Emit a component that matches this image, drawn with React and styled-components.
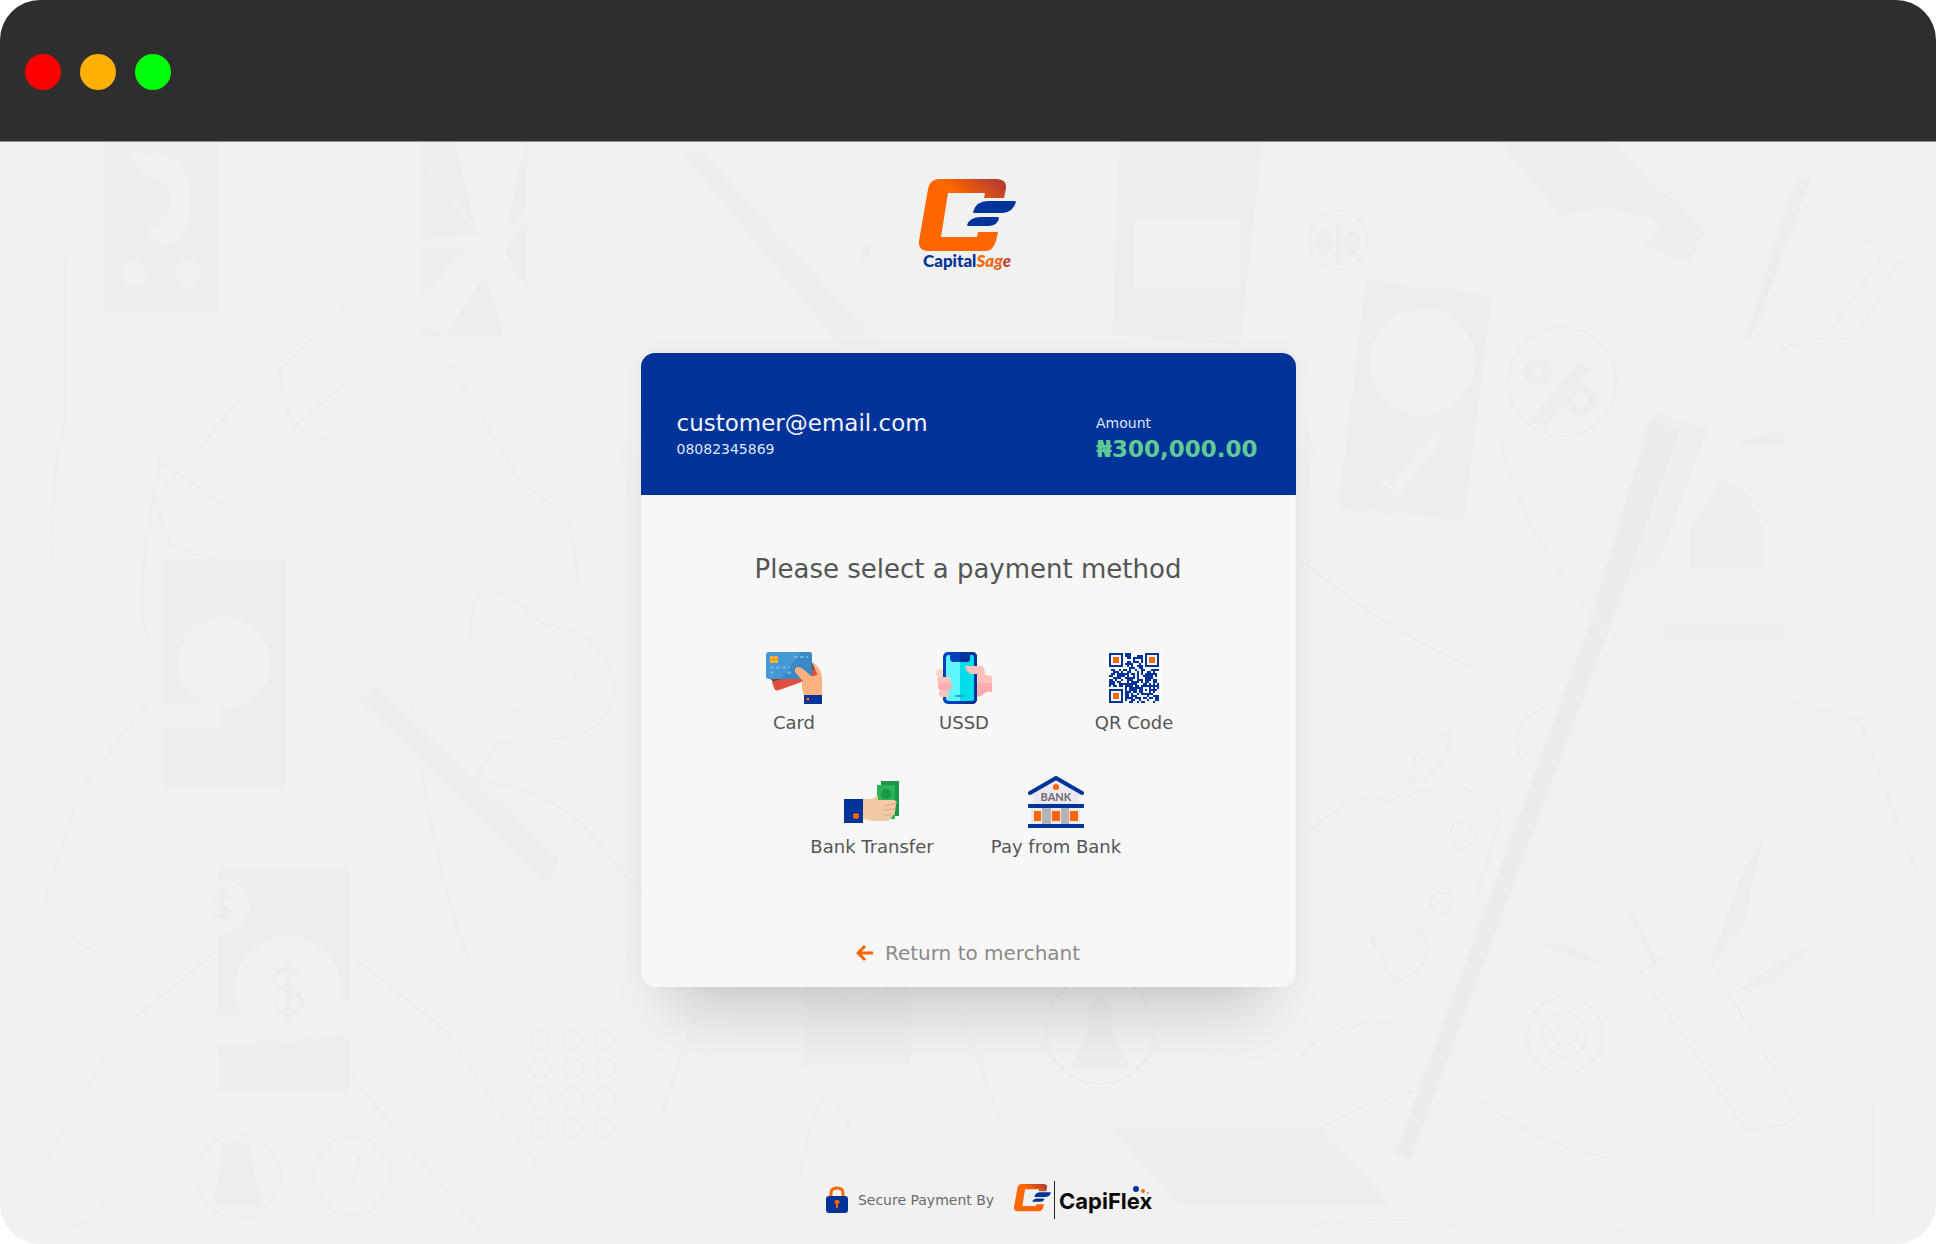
import React from "react";
import styled, { createGlobalStyle } from "styled-components";

const BLUE = "#003399";
const ORANGE = "#ff6600";
const SANS = '"DejaVu Sans", "Noto Sans", sans-serif';

const GlobalStyle = createGlobalStyle`
  * { box-sizing: border-box; }
  body { margin: 0; background: #ffffff; font-family: ${SANS}; }
`;

const Window = styled.div`
  min-height: 100vh;
  display: flex;
  flex-direction: column;
  border-radius: 40px;
  overflow: hidden;
  background: #f1f1f1;
`;

const TitleBar = styled.header`
  display: flex;
  gap: 19px;
  padding: 54px 25px 51px;
  background: #2e2e2e;
  border-bottom: 1px solid #909090;
`;

const Dot = styled.span`
  width: 36px;
  height: 36px;
  border-radius: 50%;
  background: ${(p) => p.$color};
`;

const Page = styled.main`
  position: relative;
  flex: 1;
  display: flex;
  flex-direction: column;
  align-items: center;
  padding: 37px 24px 25px;
`;

const Backdrop = styled.svg`
  position: absolute;
  inset: 0;
  width: 100%;
  height: 100%;
  opacity: 0.75;
`;

const Brand = styled.svg`
  position: relative;
  width: 98px;
  height: 96px;
`;

const Checkout = styled.section`
  position: relative;
  width: 100%;
  max-width: 655px;
  margin: 78px 0 80px;
  border-radius: 14px;
  box-shadow: 0 54px 56px -34px rgba(0, 0, 0, 0.17), 0 0 24px rgba(0, 0, 0, 0.03);
`;

const Summary = styled.div`
  display: flex;
  justify-content: space-between;
  align-items: flex-end;
  padding: 56px 38px 32px 36px;
  background: ${BLUE};
  border-radius: 14px 14px 0 0;
`;

const Customer = styled.div`
  display: flex;
  flex-direction: column;
  gap: 4px;
  padding-bottom: 6px;
`;

const Total = styled.div`
  display: flex;
  flex-direction: column;
  gap: 4px;
`;

const Large = styled.span`
  font-size: 23px;
  line-height: 28px;
  font-weight: ${(p) => (p.$strong ? 700 : 400)};
  color: ${(p) => (p.$strong ? "#5fcb94" : "#f1f4fa")};
`;

const Small = styled.span`
  font-size: 14px;
  line-height: 16px;
  color: #dfe6f3;
`;

const Body = styled.div`
  display: flex;
  flex-direction: column;
  align-items: center;
  margin: 0 1px;
  padding: 58px 24px 22px;
  background: #f7f7f7;
  border-radius: 0 0 14px 14px;
`;

const Heading = styled.h1`
  margin: 0 0 67px;
  font-size: 26px;
  line-height: 32px;
  font-weight: 400;
  color: #555555;
`;

const Methods = styled.div`
  display: flex;
  flex-direction: column;
  gap: 41px;
  margin-bottom: 82px;
  padding-right: 8px;
`;

const MethodRow = styled.div`
  display: grid;
  justify-content: center;
  grid-template-columns: repeat(${(p) => p.$count}, ${(p) => p.$column}px);
`;

const Method = styled.button`
  display: flex;
  flex-direction: column;
  align-items: center;
  gap: 7px;
  padding: 0;
  border: 0;
  background: none;
  cursor: pointer;
  font-family: ${SANS};
  font-size: 18px;
  line-height: 24px;
  color: #555555;
`;

const Picture = styled.svg`
  width: 56px;
  height: 52px;
`;

const Return = styled.a`
  display: flex;
  align-items: center;
  gap: 11px;
  font-size: 20px;
  line-height: 24px;
  color: #8a8a8a;
  text-decoration: none;
`;

const Arrow = styled.svg`
  width: 18px;
  height: 18px;
`;

const Footer = styled.footer`
  position: relative;
  display: flex;
  align-items: center;
  margin-top: auto;
  padding-left: 44px;
  font-size: 14px;
  line-height: 20px;
  color: #6b6b6b;
`;

const Lock = styled.svg`
  width: 22px;
  height: 28px;
  margin-right: 10px;
`;

const Partner = styled.svg`
  width: 140px;
  height: 38px;
  margin-left: 20px;
`;

function Mark({ id }) {
  return (
    <>
      <defs>
        <linearGradient id={id} x1="0" y1="1" x2="1" y2="0">
          <stop offset="0.62" stopColor="#ff6600" />
          <stop offset="0.95" stopColor="#b23c33" />
        </linearGradient>
      </defs>
      <path
        fill={`url(#${id})`}
        d="M9 10Q11 0 20 0H77Q88 0 87 9L85 19H65L66 14H29L22 58H58L59 53H79L77 62Q74 72 66 72H8Q-1 71 0 62Z"
      />
      <path
        fill={BLUE}
        d="M97 23Q97 22 95 22H69Q57 22 54 33Q54 34 56 34H84Q94 33 97 23ZM80 39Q80 38 78 38H62Q51 38 48 46Q48 47 50 47H70Q79 46 80 39Z"
      />
    </>
  );
}

function CardIcon() {
  return (
    <Picture viewBox="0 0 56 52" aria-hidden="true">
      <path fill="#ffb27f" d="M46 10Q55 15 56 25V43H38L36 37V24Z" />
      <path fill="#6b4a3c" d="M4 26H46V10L50 20L9 33Z" />
      <path fill="#e04f3f" d="M6 30L48 17L51 21Q52 24 49 25L12 38.500Q9 39 8 36Z" />
      <path fill="#ffb27f" d="M38 26L48 24L54 22V43H38Q35 34 38 26Z" />
      <rect width="46" height="27" rx="3" fill="#4599d5" />
      <path fill="#3b88c6" d="M35 0H43Q46 0 46 3V24Q46 27 43 27H15Z" />
      <rect x="4" y="4" width="8" height="7" rx="1" fill="#ffb52e" />
      <path d="M4 7.500H12M8 4V11" stroke="#f58a1f" strokeWidth="1" />
      <path
        d="M4 15.500H24M4 20.500H8M21 20.500H25M28 5H42"
        stroke="#6fb5d8"
        strokeWidth="2"
        strokeDasharray="4 2"
      />
      <path fill="#ffb27f" d="M29 20Q28 15 33 15L37 17L50 28L44 38L36 28Z" />
      <rect x="38" y="43" width="18" height="9" fill={BLUE} />
      <circle cx="42" cy="47" r="1.500" fill={ORANGE} />
    </Picture>
  );
}

function PhoneIcon() {
  return (
    <Picture viewBox="0 0 56 52" aria-hidden="true">
      <rect y="17" width="14" height="8" rx="4" fill="#ffd6c7" />
      <path fill="#ffc3bb" d="M36 14H46Q49 15 49 23L56 24V32H38Z" />
      <path fill="#ffacae" d="M38 31H56V40H50Q46 45 38 45Z" />
      <rect x="7" width="34" height="52" rx="5" fill="#003fc0" />
      <path fill={BLUE} d="M24 0H36Q41 0 41 5V47Q41 52 36 52H24Z" />
      <rect x="10" y="3" width="28" height="46" rx="3" fill="#60f6ff" />
      <path fill="#00dce8" d="M24 3H35Q38 3 38 6V46Q38 49 35 49H24Z" />
      <path fill="#003fc0" d="M14 0H34V6Q34 10 30 10H18Q14 10 14 6Z" />
      <path fill={BLUE} d="M24 0H34V6Q34 10 30 10H24Z" />
      <rect x="19" y="43" width="10" height="2" rx="1" fill="#00b4cf" />
      <rect x="1" y="25" width="14" height="7" rx="3" fill="#ffc3bb" />
      <rect x="2" y="31" width="14" height="7" rx="3" fill="#ffacae" />
      <rect x="3" y="38" width="10" height="7" rx="3" fill="#ffc3bb" />
      <path fill="#ffc3bb" d="M29 14H44Q48 14 49 23V31H41V22L35 22Q30 20 29 14Z" />
    </Picture>
  );
}

const QR_SIZE = 25;
const qrModules = [];
let seed = 11;
for (let y = 0; y < QR_SIZE; y += 1) {
  for (let x = 0; x < QR_SIZE; x += 1) {
    seed = (seed * 16807) % 2147483647;
    const inFinder = (x < 8 && y < 8) || (x > 16 && y < 8) || (x < 8 && y > 16);
    const inAlign = x > 15 && x < 21 && y > 15 && y < 21;
    if (!inFinder && !inAlign && seed % 100 < 54) qrModules.push([x, y]);
  }
}

function Finder({ x, y }) {
  return (
    <g transform={`translate(${x} ${y})`}>
      <rect x="1" y="1" width="12" height="12" fill="#ffffff" stroke={BLUE} strokeWidth="2" />
      <rect x="4" y="4" width="6" height="6" fill={ORANGE} />
    </g>
  );
}

function QrIcon() {
  return (
    <Picture viewBox="0 0 56 52" aria-hidden="true">
      <rect x="1" width="54" height="52" fill="#ffffff" />
      <g transform="translate(3 1)" fill={BLUE}>
        {qrModules.map(([x, y]) => (
          <rect key={`${x}-${y}`} x={x * 2} y={y * 2} width="2" height="2" />
        ))}
        <Finder x={0} y={0} />
        <Finder x={36} y={0} />
        <Finder x={0} y={36} />
        <rect x="33" y="33" width="8" height="8" fill="none" stroke={BLUE} strokeWidth="2" />
        <rect x="36" y="36" width="2" height="2" />
      </g>
    </Picture>
  );
}

function TransferIcon() {
  return (
    <Picture viewBox="0 0 56 52" aria-hidden="true">
      <rect x="37" y="5" width="18" height="35" fill="#1f9547" />
      <path fill="#2ab557" d="M33 9H51V43H47L33 30Z" />
      <circle cx="42" cy="18" r="5" fill="#1f9547" />
      <path fill="#f2c9a0" d="M19 23H28Q32 20 34 20V24H50Q54 25 52 28L51 36Q50 40 48 40Q47 45 43 45H30L19 43Z" />
      <path d="M41 30L52 27M40 34L51 33M39 39L48 39" stroke="#dfa884" strokeWidth="1" />
      <rect y="23" width="19" height="24" fill={BLUE} />
      <circle cx="12" cy="40" r="3" fill={ORANGE} />
    </Picture>
  );
}

function BankIcon() {
  return (
    <Picture viewBox="0 0 56 52" aria-hidden="true">
      <path fill="#ebe9f0" d="M28 3L51 17V28H5V17Z" />
      <rect x="3" y="31" width="49" height="17" fill="#ebe9f0" />
      <path d="M2 17L28 2L54 17" fill="none" stroke={BLUE} strokeWidth="4" strokeLinecap="round" />
      <circle cx="28" cy="11" r="3" fill={ORANGE} />
      <text
        x="28"
        y="25"
        textAnchor="middle"
        fontFamily="Lato, sans-serif"
        fontSize="11"
        fontWeight="700"
        fill="#6e6672"
      >
        BANK
      </text>
      <path fill="#b7b2b8" d="M14 31H23V48H14ZM33 31H41V48H33Z" />
      <path fill={ORANGE} d="M6 35H13V45H6ZM24 35H32V45H24ZM42 35H50V45H42Z" />
      <rect y="28" width="56" height="4" rx="1" fill={BLUE} />
      <rect y="48" width="56" height="4" fill={BLUE} />
    </Picture>
  );
}

function PageBackdrop() {
  const line = { fill: "none", stroke: "#ececec", strokeWidth: 2 };
  return (
    <Backdrop viewBox="0 142 1936 1102" preserveAspectRatio="xMidYMin slice" aria-hidden="true">
      <g fill="#eeeeee">
        <rect x="104" y="142" width="114" height="168" />
        <path d="M420 142H527V338H420Z" />
        <rect x="163" y="559" width="124" height="228" rx="6" />
        <rect x="218" y="868" width="132" height="224" rx="8" />
        <path d="M360 700L375 686L560 860L545 882Z" />
        <path d="M1500 142H1610L1705 230L1690 262L1560 215Z" />
        <path d="M1366 280L1492 295L1464 520L1338 508Z" />
        <path d="M1656 412L1708 428L1660 560L1590 622L1620 520Z" opacity="0.6" />
        <path d="M1690 568V530L1722 480L1745 490L1764 530V568Z" />
        <path d="M1740 440L1784 432V445H1736Z" />
        <path d="M1664 622H1784V642H1664Z" />
        <path d="M1120 142H1262L1240 345L1112 335Z" />
        <path d="M680 150L700 150L880 345H840Z" />
        <path d="M1110 1128H1320L1392 1205H1180Z" />
        <rect x="805" y="975" width="105" height="90" />
        <path d="M1625 905L1640 925L1662 975L1646 950ZM1762 840L1744 925L1710 965L1740 880Z" />
        <path d="M1540 945L1562 942L1610 967L1575 958ZM1735 993L1770 968L1812 945L1780 980Z" />
      </g>
      <path fill="#ebebeb" d="M1650 420L1590 622L1395 1155L1410 1160L1612 622L1680 430ZM1796 180H1810L1755 330L1745 340Z" />
      <g fill="#f1f1f1">
        <path d="M132 155Q190 145 190 200Q190 240 165 243Q140 235 152 227Q180 220 165 178Q140 180 132 155Z" />
        <circle cx="135" cy="273" r="13" />
        <circle cx="188" cy="273" r="13" />
        <path d="M420 160L480 235L420 238V247H465L420 300V325L445 335L485 275L505 338L527 350V290L505 250L527 220V205L505 235L525 142H455L475 225L430 170Z" />
        <circle cx="224" cy="663" r="46" />
        <path d="M160 705H220V728H160Z" />
        <circle cx="288" cy="990" r="53" />
        <circle cx="222" cy="906" r="27" />
        <path d="M218 1015L350 1000V1035L290 1040L218 1045Z" />
        <ellipse cx="1602" cy="229" rx="58" ry="19" />
        <ellipse cx="1650" cy="275" rx="60" ry="17" />
        <circle cx="1422" cy="362" r="53" />
        <path d="M1378 478L1392 485L1435 432L1442 440L1395 500Z" />
        <ellipse cx="857" cy="980" rx="28" ry="20" />
        <path d="M1135 220H1240V290H1135Z" />
      </g>
      <g {...line}>
        <circle cx="238" cy="1176" r="42" />
        <circle cx="352" cy="1176" r="39" />
        <path d="M360 1155Q354 1180 354 1192" />
        <circle cx="1565" cy="1035" r="38" />
        <circle cx="1565" cy="1035" r="22" />
        <circle cx="1565" cy="1035" r="11" />
        <circle cx="1463" cy="835" r="13" />
        <circle cx="1442" cy="903" r="11" />
        <circle cx="1100" cy="1030" r="54" />
        <path d="M1543 708Q1500 728 1525 765M1410 775Q1420 730 1450 735Q1448 770 1410 785Z" />
        <path d="M1300 1060Q1320 1020 1410 1022M1300 1140Q1380 1095 1412 1092" />
        <path d="M1640 973L1660 960H1710L1800 1115Q1795 1125 1745 1130Z" />
        <path d="M1310 832Q1350 790 1390 800Q1490 770 1500 820L1475 900" />
        <path d="M1370 935L1390 942L1420 930Q1445 960 1395 982Z" />
      </g>
      <g fill="none" stroke="#eeeeee" strokeWidth="2">
        <circle cx="1562" cy="382" r="54" />
        <circle cx="1338" cy="240" r="29" />
        <path d="M35 1180L120 1030L218 950M60 1225Q90 1235 110 1190L180 1080L218 1050M350 955L445 1030L540 1170M350 1075L420 1160L480 1230" />
        <path d="M65 260V420Q50 480 52 560M350 300L280 370Q285 440 325 440M230 510L160 460Q130 620 150 640" />
        <path d="M350 380L290 430M240 400L155 500L170 545L250 570M450 365L520 480L570 520L580 590" />
        <path d="M470 640Q470 550 540 622Q630 640 610 710Q590 745 500 742L475 780Q570 790 610 860L660 910" />
        <path d="M150 700L80 790L45 900Q70 950 110 955M410 700Q440 900 470 960M510 665H575V688H515M515 710H570" />
        <path d="M1500 440Q1530 560 1620 640M1300 560Q1400 640 1480 670H1530M1780 700L1860 720L1900 830L1920 880" />
        <path d="M1810 240H1870L1880 262L1830 330M1900 260L1860 330M1780 350Q1810 335 1850 340M1873 1100V1220M1480 1100Q1560 1160 1640 1160L1670 1220" />
        <path d="M1300 1228Q1400 1210 1470 1230H1620M700 1000L660 1120M800 1180Q820 1050 850 1130M960 1010L1000 1120" />
        {[1040, 1068, 1098, 1128].map((y) =>
          [540, 573, 605].map((x) => <circle key={`${x}-${y}`} cx={x} cy={y} r="10" />)
        )}
      </g>
      <g fill="#ececec">
        <path d="M222 1145Q238 1135 250 1145L254 1170L262 1205H212L220 1170Z" />
        <path d="M1088 1005Q1100 990 1112 1005V1030L1130 1068H1070L1088 1030Z" />
        <path d="M1530 420L1580 362L1590 368L1545 428Z" />
        <circle cx="1538" cy="372" r="14" />
        <circle cx="1580" cy="400" r="16" />
        <ellipse cx="1324" cy="242" rx="8" ry="13" />
        <ellipse cx="1352" cy="242" rx="8" ry="13" />
        <rect x="1336" y="224" width="5" height="38" />
      </g>
      <circle cx="1538" cy="372" r="6" fill="#f1f1f1" />
      <circle cx="1580" cy="400" r="7" fill="#f1f1f1" />
      <path
        d="M300 975Q290 965 278 972Q268 985 288 990Q310 998 298 1010Q285 1018 275 1006M288 960V1022M229 896Q215 890 215 900Q229 908 228 915Q218 920 213 912M222 888V922"
        fill="none"
        stroke="#ececec"
        strokeWidth="4"
      />
      <ellipse cx="866" cy="254" rx="4" ry="8" fill="#fbe6da" opacity="0.5" />
    </Backdrop>
  );
}

const primary = [
  { label: "Card", Icon: CardIcon },
  { label: "USSD", Icon: PhoneIcon },
  { label: "QR Code", Icon: QrIcon },
];
const secondary = [
  { label: "Bank Transfer", Icon: TransferIcon },
  { label: "Pay from Bank", Icon: BankIcon },
];

function MethodGroup({ items, column }) {
  return (
    <MethodRow $count={items.length} $column={column}>
      {items.map(({ label, Icon }) => (
        <Method key={label} type="button">
          <Icon />
          {label}
        </Method>
      ))}
    </MethodRow>
  );
}

export default function App() {
  return (
    <>
      <GlobalStyle />
      <Window>
        <TitleBar>
          <Dot $color="#ff0000" />
          <Dot $color="#ffb000" />
          <Dot $color="#00ff0a" />
        </TitleBar>
        <Page>
          <PageBackdrop />
          <Brand viewBox="0 0 98 96" role="img" aria-label="CapitalSage">
            <Mark id="brand-mark" />
            <text
              x="48"
              y="88"
              textAnchor="middle"
              fontFamily="Lato, sans-serif"
              fontSize="17"
              fontWeight="900"
              fill={BLUE}
            >
              Capital
              <tspan fill={ORANGE} fontStyle="italic">
                Sa
              </tspan>
              <tspan fill="#e8641c" fontStyle="italic">
                g
              </tspan>
              <tspan fill="#c4462e" fontStyle="italic">
                e
              </tspan>
            </text>
          </Brand>
          <Checkout>
            <Summary>
              <Customer>
                <Large>customer@email.com</Large>
                <Small>08082345869</Small>
              </Customer>
              <Total>
                <Small>Amount</Small>
                <Large $strong>₦300,000.00</Large>
              </Total>
            </Summary>
            <Body>
              <Heading>Please select a payment method</Heading>
              <Methods>
                <MethodGroup items={primary} column={170} />
                <MethodGroup items={secondary} column={184} />
              </Methods>
              <Return href="#merchant">
                <Arrow viewBox="0 0 18 18" aria-hidden="true">
                  <path
                    d="M9 2L2 9L9 16M2 9H17"
                    fill="none"
                    stroke={ORANGE}
                    strokeWidth="3"
                    strokeLinejoin="round"
                  />
                </Arrow>
                Return to merchant
              </Return>
            </Body>
          </Checkout>
          <Footer>
            <Lock viewBox="0 0 22 28" aria-hidden="true">
              <path d="M5 12V7Q5 2 11 2Q17 2 17 7V12" fill="none" stroke={ORANGE} strokeWidth="3" />
              <rect y="10" width="22" height="17" rx="3" fill={BLUE} />
              <path fill={ORANGE} d="M11 14A2 2 0 0 1 12 18V22H10V18A2 2 0 0 1 11 14Z" />
            </Lock>
            Secure Payment By
            <Partner viewBox="0 0 140 38" role="img" aria-label="CapiFlex">
              <g transform="translate(0 3) scale(0.38)">
                <Mark id="partner-mark" />
              </g>
              <path d="M40.500 0V38" stroke="#222222" strokeWidth="1" />
              <text
                x="45"
                y="28"
                fontFamily="Inter, sans-serif"
                fontSize="22"
                fontWeight="700"
                fill="#0a0a0a"
              >
                CapiFlex
              </text>
              <circle cx="122" cy="8" r="3" fill={BLUE} />
              <circle cx="129" cy="10" r="2" fill={ORANGE} />
              <circle cx="134" cy="12" r="1" fill="#ff8a65" />
            </Partner>
          </Footer>
        </Page>
      </Window>
    </>
  );
}
